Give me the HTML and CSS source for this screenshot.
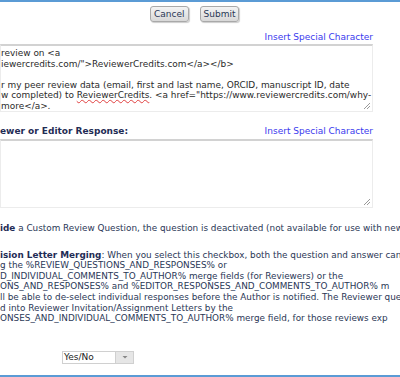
FILE: index.html
```html
<!DOCTYPE html>
<html>
<head>
<meta charset="utf-8">
<link rel="stylesheet" href="styles.css">
</head>
<body>
<div class="page">
  <div class="actions">
    <button class="btn">Cancel</button>
    <button class="btn">Submit</button>
  </div>

  <div class="special"><a href="#">Insert Special Character</a></div>
  <div class="area area-first">
    <div class="line">review on &lt;a</div>
    <div class="line">iewercredits.com/"&gt;ReviewerCredits.com&lt;/a&gt;&lt;/b&gt;</div>
    <div class="line">&nbsp;</div>
    <div class="line">r my peer review data (email, first and last name, ORCID, manuscript ID, date</div>
    <div class="line">w completed) to <span class="spell">ReviewerCredits</span>. &lt;a href="https://www.reviewercredits.com/why-</div>
    <div class="line">more&lt;/a&gt;.</div>
    <span class="grip"><svg width="8" height="8" viewBox="0 0 8 8"><path d="M7 1L1 7M7 4L4 7" stroke="#999" stroke-width="1"/></svg></span>
  </div>

  <div class="label-row">
    <span class="label">ewer or Editor Response:</span>
    <a href="#">Insert Special Character</a>
  </div>
  <div class="area area-second">
    <span class="grip"><svg width="8" height="8" viewBox="0 0 8 8"><path d="M7 1L1 7M7 4L4 7" stroke="#999" stroke-width="1"/></svg></span>
  </div>

  <div class="note">
    <div class="line"><b>ide</b> a Custom Review Question, the question is deactivated (not available for use with new</div>
  </div>

  <div class="note">
    <div class="line"><b>ision Letter Merging</b>: When you select this checkbox, both the question and answer can</div>
    <div class="line">g the %REVIEW_QUESTIONS_AND_RESPONSES% or</div>
    <div class="line">D_INDIVIDUAL_COMMENTS_TO_AUTHOR% merge fields (for Reviewers) or the</div>
    <div class="line">ONS_AND_RESPONSES% and %EDITOR_RESPONSES_AND_COMMENTS_TO_AUTHOR% m</div>
    <div class="line">ll be able to de-select individual responses before the Author is notified. The Reviewer que</div>
    <div class="line">d into Reviewer Invitation/Assignment Letters by the</div>
    <div class="line">ONSES_AND_INDIVIDUAL_COMMENTS_TO_AUTHOR% merge field, for those reviews exp</div>
  </div>

  <div class="select-row">
    <div class="select">
      <span class="select-value">Yes/No</span>
      <span class="select-arrow"><svg width="6" height="4" viewBox="0 0 6 4"><path d="M0.5 1h5L3 3.5z" fill="#888"/></svg></span>
    </div>
  </div>
</div>
</body>
</html>
```

FILE: styles.css
```css
html, body {
  margin: 0;
  padding: 0;
  background: #fff;
}
body {
  width: 400px;
  height: 377px;
  overflow: hidden;
  font-family: "DejaVu Sans", Verdana, sans-serif;
  font-size: 9px;
  color: #2a3756;
}
.page {
  border-top: 2px solid #5b9bd5;
  border-bottom: 2px solid #5b9bd5;
  height: 373px;
  box-sizing: content-box;
  overflow: hidden;
}
.actions {
  display: flex;
  gap: 11px;
  padding: 4px 0 0 150px;
  height: 16px;
}
.btn {
  font-family: "DejaVu Sans", Verdana, sans-serif;
  font-size: 9px;
  color: #2a3756;
  height: 16px;
  padding: 0 3px;
  border: 1px solid #a9a9a9;
  border-radius: 3px;
  background: linear-gradient(#f4f4f4, #d8d8d8);
  box-shadow: 1px 1px 1px rgba(0,0,0,0.2);
}
a {
  color: #3a3aee;
  text-decoration: none;
}
.special {
  text-align: right;
  width: 373px;
  margin-top: 10px;
  height: 11px;
  line-height: 11px;
}
.area {
  position: relative;
  width: 373px;
  box-sizing: border-box;
  border: 1px solid #ececec;
  border-top: 2px solid #d2d2d2;
  color: #2a2a2a;
  padding-top: 2px;
  line-height: 10.6px;
  font-size: 8.95px;
}
.area-first {
  height: 68px;
  margin-top: 1px;
}
.area-second {
  height: 69px;
  margin-top: 2px;
}
.line {
  white-space: nowrap;
}
.spell {
  text-decoration: underline wavy #e04040;
  text-decoration-thickness: 1px;
}
.grip {
  position: absolute;
  right: 1px;
  bottom: 1px;
  width: 8px;
  height: 8px;
  display: flex;
}
.label-row {
  display: flex;
  justify-content: space-between;
  width: 373px;
  margin-top: 14px;
  height: 11px;
  line-height: 11px;
}
.label {
  font-weight: bold;
  color: #1f2c55;
}
.note {
  margin-top: 15px;
  line-height: 10.6px;
  font-size: 8.85px;
}
.note + .note {
  margin-top: 16px;
}
.note b {
  color: #1f2c55;
}
.select-row {
  margin-top: 27px;
  padding-left: 62px;
}
.select {
  display: flex;
  width: 72px;
  height: 13px;
  box-sizing: border-box;
  border: 1px solid #d0d0d0;
  background: #fff;
  color: #222;
}
.select-value {
  flex: 1;
  line-height: 11px;
  padding-left: 1px;
}
.select-arrow {
  width: 17px;
  background: #e6e6e6;
  border-left: 1px solid #d0d0d0;
  display: flex;
  align-items: center;
  justify-content: center;
}
```
